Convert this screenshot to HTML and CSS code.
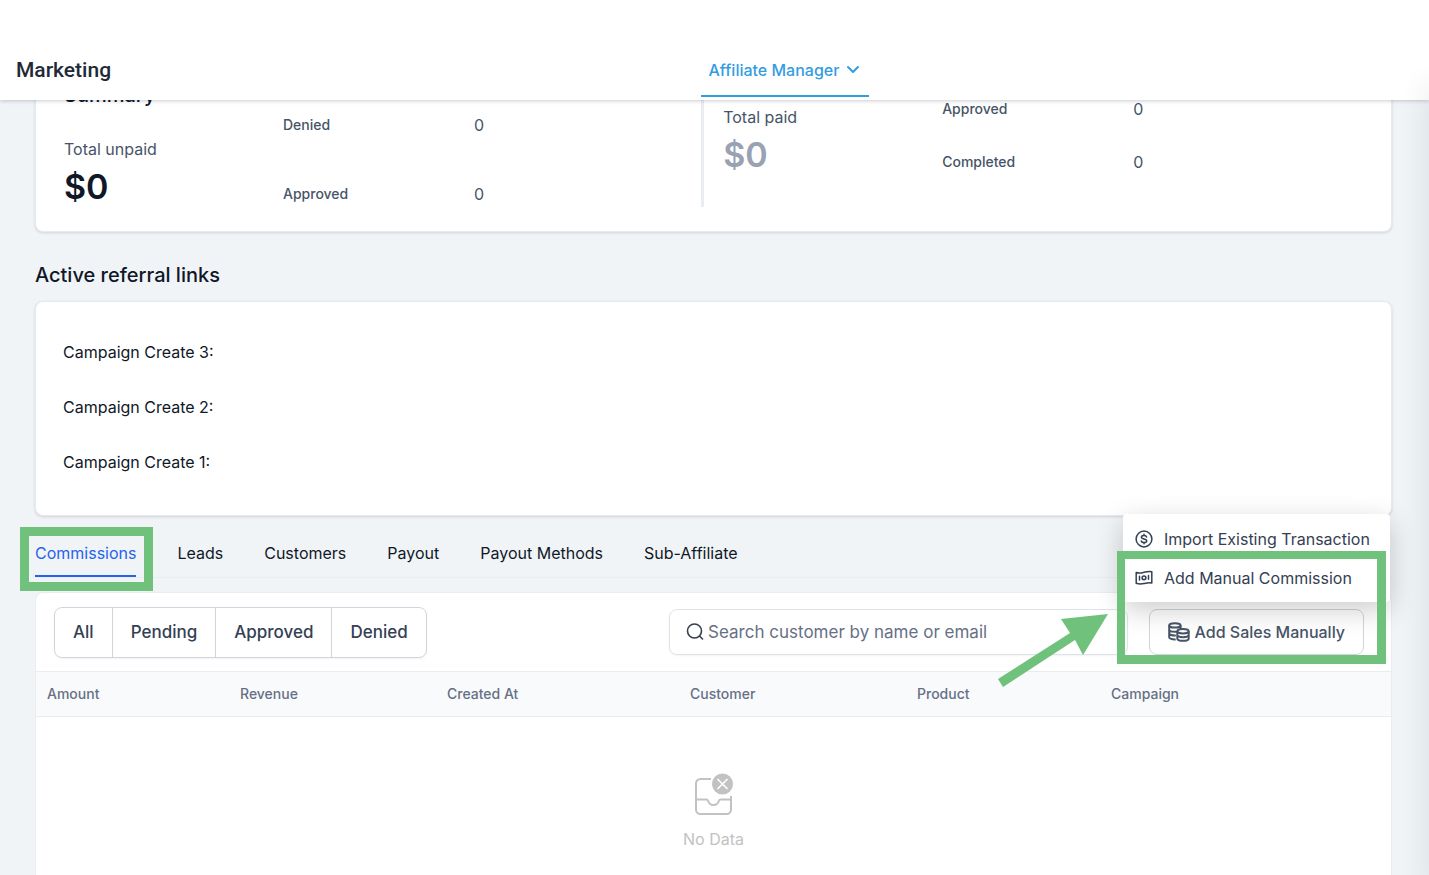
FILE: index.html
```html
<!DOCTYPE html>
<html lang="en">
<head>
<meta charset="utf-8">
<meta name="viewport" content="width=device-width, initial-scale=1">
<title>Marketing - Affiliate Manager</title>
<link rel="stylesheet" href="styles.css">
</head>
<body>
<header class="topbar">
  <h1 class="topbar-title">Marketing</h1>
  <nav class="topbar-nav">
    <button class="nav-tab" type="button">Affiliate Manager
      <svg class="chevron" viewBox="0 0 14 10" fill="none" stroke="currentColor" stroke-width="2" stroke-linecap="round" stroke-linejoin="round"><path d="M2 2l5 5 5-5"/></svg>
    </button>
  </nav>
</header>
<main class="page">
  <section class="card summary">
    <div class="unpaid">
      <div>
        <h2 class="heading">Summary</h2>
        <p class="total-label">Total unpaid</p>
        <p class="total">$0</p>
      </div>
      <dl class="counts">
        <div class="count"><dt>Denied</dt><dd>0</dd></div>
        <div class="count"><dt>Approved</dt><dd>0</dd></div>
      </dl>
    </div>
    <div class="paid">
      <div>
        <p class="total-label">Total paid</p>
        <p class="total total-muted">$0</p>
      </div>
      <dl class="counts">
        <div class="count"><dt>Approved</dt><dd>0</dd></div>
        <div class="count"><dt>Completed</dt><dd>0</dd></div>
      </dl>
    </div>
  </section>

  <h2 class="heading links-heading">Active referral links</h2>
  <ul class="card links">
    <li>Campaign Create 3:</li>
    <li>Campaign Create 2:</li>
    <li>Campaign Create 1:</li>
  </ul>

  <nav class="tabs">
    <button class="tab tab-active" type="button">Commissions<span class="highlight highlight-tab"></span></button>
    <button class="tab" type="button">Leads</button>
    <button class="tab" type="button">Customers</button>
    <button class="tab" type="button">Payout</button>
    <button class="tab" type="button">Payout Methods</button>
    <button class="tab" type="button">Sub-Affiliate</button>
  </nav>

  <section class="panel">
    <div class="toolbar">
      <div class="filters">
        <button type="button">All</button>
        <button type="button">Pending</button>
        <button type="button">Approved</button>
        <button type="button">Denied</button>
      </div>
      <label class="search">
        <svg class="search-icon" viewBox="0 0 18 18" fill="none" stroke="currentColor" stroke-width="1.6" stroke-linecap="round"><circle cx="8.500" cy="8" r="7"/><path d="M13.500 13l3 3"/></svg>
        <input type="text" aria-label="Search customer" placeholder="Search customer by name or email">
      </label>
      <div class="actions">
        <button class="add-sales" type="button">
          <svg class="coins" viewBox="0 0 22 20" fill="none" stroke="currentColor" stroke-width="2"><ellipse cx="6.900" cy="3.400" rx="5.700" ry="2.200"/><path d="M1.200 3.400v11.800c0 1.400 3 2.400 6.500 2.200M1.200 7.400c0 1.400 3 2.300 5.700 2.300s5.700-.9 5.700-2.300M1.200 11.300c0 1.400 3 2.400 6.600 2.200M12.600 3.400v4"/><ellipse cx="15" cy="9.200" rx="5.700" ry="2.200" fill="#fff"/><path d="M9.300 9.200v7.200c0 1.400 2.500 2.400 5.700 2.400s5.700-1 5.700-2.400V9.200M9.300 12.800c0 1.400 2.500 2.400 5.700 2.400s5.700-1 5.700-2.400"/></svg>
          Add Sales Manually
        </button>
        <div class="menu" role="menu">
          <button type="button" role="menuitem">
            <svg class="menu-icon" viewBox="0 0 18 18" fill="none" stroke="currentColor" stroke-width="1.5" stroke-linecap="round"><circle cx="9" cy="9" r="7.900"/><path d="M11.600 7c-.2-.9-1.200-1.500-2.600-1.500-1.500 0-2.600.6-2.600 1.700 0 2.500 5.300 1.100 5.300 3.700 0 1.100-1.100 1.700-2.700 1.700-1.400 0-2.500-.6-2.700-1.600M9 4.200v1M9 12.800v1"/></svg>
            Import Existing Transaction
          </button>
          <button type="button" role="menuitem">
            <svg class="menu-icon" viewBox="0 0 18 18" fill="none" stroke="currentColor" stroke-width="1.5" stroke-linecap="round" stroke-linejoin="round"><path d="M1.200 3.500c2.800 1.100 5.200.4 7.800-.2 2.600-.6 5.200-1.100 7.800-.5V14c-2.800-.6-5.200 0-7.800.6-2.600.6-5 .8-7.800-.3zM4.500 7.300v3.700M13.500 6.600v3.700"/><circle cx="9" cy="8.800" r="1.900"/></svg>
            Add Manual Commission
          </button>
        </div>
        <span class="highlight highlight-action"></span>
        <svg class="arrow" viewBox="0 0 112 76" fill="#6fc17b"><path d="M110 3L63 8l9 14L0 68l5 8 72-47 8 15z"/></svg>
      </div>
    </div>
    <table class="table">
      <colgroup><col class="c1"><col class="c2"><col class="c3"><col class="c4"><col class="c5"><col></colgroup>
      <thead><tr><th>Amount</th><th>Revenue</th><th>Created At</th><th>Customer</th><th>Product</th><th>Campaign</th></tr></thead>
    </table>
    <div class="empty">
      <svg class="empty-icon" viewBox="0 0 40 44" fill="none" stroke="#c2c2c2" stroke-width="2"><path d="M17 7H6.500a4.500 4.500 0 0 0-4.500 4.500v26A4.500 4.500 0 0 0 6.500 42h26a4.500 4.500 0 0 0 4.500-4.500V24M2 27.500h10.500c1 0 1.300.5 1.600 1.500.8 2.500 2.800 4 5.400 4s4.600-1.500 5.400-4c.3-1 .6-1.500 1.600-1.500H37"/><circle cx="28.500" cy="12" r="10.500" fill="#c2c2c2" stroke="none"/><path d="M23.500 7l10 10M33.500 7l-10 10" stroke="#fff" stroke-width="1.600"/></svg>
      <p>No Data</p>
    </div>
  </section>
</main>
</body>
</html>
```
FILE: styles.css
```css
* { box-sizing: border-box; }
body {
  margin: 0;
  min-height: 100vh;
  display: flex;
  flex-direction: column;
  background: #f0f4f7;
  color: #101828;
  font: 400 16px/24px Inter, "Liberation Sans", sans-serif;
}
body::after {
  content: "";
  position: fixed;
  top: 84px;
  right: -20px;
  bottom: -20px;
  width: 20px;
  z-index: 4;
  box-shadow: 0 0 30px rgba(30, 40, 50, .12);
  pointer-events: none;
}
h1, h2, p, dl, dd, ul { margin: 0; padding: 0; }
button, input { font: inherit; color: inherit; }
button { margin: 0; border: 0; padding: 0; background: none; cursor: pointer; white-space: nowrap; }
svg { display: block; flex: none; }

.topbar {
  position: relative;
  z-index: 3;
  height: 100px;
  padding: 40px 16px 0;
  display: grid;
  grid-template-columns: 49% 1fr;
  background: #fff;
  box-shadow: 0 1px 4px rgba(16, 24, 40, .22);
}
.topbar-title { font: 500 21px/60px Roboto, sans-serif; color: #1f2a37; }
.nav-tab {
  display: flex;
  align-items: center;
  gap: 7px;
  height: 57px;
  padding: 5px 9px 0 8px;
  border-bottom: 2px solid #349ddf;
  color: #349ddf;
  font-weight: 500;
}
.chevron { width: 14px; height: 10px; }

.page { flex: 1; display: flex; flex-direction: column; padding: 0 37px 0 35px; }
.card {
  background: #fff;
  border: 1px solid #e6eaf0;
  border-radius: 8px;
  box-shadow: 0 1px 3px rgba(16, 24, 40, .14);
}
.heading { font-size: 20px; line-height: 28px; font-weight: 500; }

.summary { display: grid; grid-template-columns: 27fr 28fr; margin-top: -44px; padding: 24px 0; }
.unpaid, .paid { display: grid; grid-template-columns: 219px 1fr; }
.unpaid { padding-left: 28px; }
.paid { padding: 24px 0 0 19px; border-left: 3px solid #e9edf2; }
.unpaid .total-label { margin-top: 28px; }
.total-label { color: #475467; }
.total { margin-top: 6px; font-size: 34px; line-height: 40px; font-weight: 600; }
.total-muted { color: #98a2b3; }
.counts { display: grid; align-content: start; color: #475467; }
.unpaid .counts { padding-top: 32px; row-gap: 45px; }
.paid .counts { padding-top: 16px; margin-top: -24px; row-gap: 29px; }
.count { display: grid; grid-template-columns: 191px 1fr; align-items: center; }
.count dt { font-size: 14px; font-weight: 500; }

.links-heading { margin: 29px 0 12px; }
.links { list-style: none; padding: 38px 27px 41px; display: grid; gap: 31px; }

.tabs { display: flex; gap: 41px; margin-bottom: 14px; border-bottom: 1px solid #eaecf0; }
.tab { position: relative; height: 61px; padding-top: 14px; border-bottom: 2px solid transparent; }
.tab-active { color: #2563eb; border-color: #2563eb; }
.highlight { position: absolute; border: 9px solid #6fc17b; pointer-events: none; }
.highlight-tab { inset: 11px -17px -16px -15px; }

.panel { flex: 1; background: #fff; border: 1px solid #eaecf0; border-bottom: 0; border-radius: 8px 8px 0 0; }
.toolbar { display: flex; align-items: center; height: 78px; padding: 0 27px 0 18px; }
.filters {
  display: flex;
  height: 51px;
  margin-right: auto;
  border: 1px solid #d0d5dd;
  border-radius: 8px;
  box-shadow: 0 1px 2px rgba(16, 24, 40, .05);
}
.filters button { padding: 0 18px; color: #344054; font-size: 17px; font-weight: 500; }
.filters button + button { border-left: 1px solid #d0d5dd; }
.search {
  display: flex;
  align-items: center;
  gap: 4px;
  width: 35%;
  height: 46px;
  margin-right: 21px;
  padding: 0 16px;
  border: 1px solid #dfe3e9;
  border-radius: 8px;
  box-shadow: 0 1px 2px rgba(16, 24, 40, .05);
}
.search-icon { width: 18px; height: 18px; color: #344054; }
.search input { flex: 1; min-width: 0; border: 0; padding: 0; outline: 0; background: none; font-size: 17px; }
.search input::placeholder { color: #667085; opacity: 1; }
.actions { position: relative; }
.add-sales {
  display: flex;
  align-items: center;
  gap: 5px;
  height: 46px;
  padding: 0 18px;
  border: 1px solid #d0d5dd;
  border-radius: 8px;
  color: #475467;
  font-weight: 500;
}
.coins { width: 22px; height: 20px; }
.menu {
  position: absolute;
  right: -26px;
  bottom: 53px;
  z-index: 1;
  width: 267px;
  padding: 5px 0;
  border-radius: 4px;
  background: #fff;
  box-shadow: 0 8px 28px rgba(0, 0, 0, .2);
}
.menu button { display: flex; align-items: center; gap: 11px; width: 100%; height: 39px; padding: 0 12px; color: #344054; }
.menu-icon { width: 18px; height: 18px; }
.highlight-action { z-index: 2; inset: -58px -22px -9px -32px; border-width: 8px 9px 9px 8px; }
.arrow { position: absolute; z-index: 2; right: 254px; top: 2px; width: 112px; height: 76px; }

.table { width: 100%; table-layout: fixed; border-collapse: collapse; }
.table th {
  height: 45px;
  padding: 0 11px;
  border: solid #eaecf0;
  border-width: 1px 0;
  background: #f9fafc;
  color: #667085;
  font-size: 14px;
  font-weight: 500;
  text-align: left;
}
.c1 { width: 193px; }
.c2 { width: 207px; }
.c3 { width: 243px; }
.c4 { width: 227px; }
.c5 { width: 194px; }
.empty { display: flex; flex-direction: column; align-items: center; gap: 11px; padding-top: 55px; color: #c2c2c2; }
.empty-icon { width: 40px; height: 44px; }
```
